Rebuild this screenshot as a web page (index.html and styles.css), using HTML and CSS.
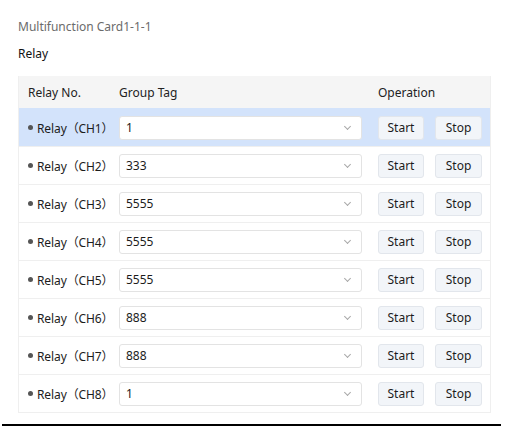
FILE: index.html
```html
<!DOCTYPE html>
<html lang="en">
  <head>
    <title>Relay</title>
    <meta charset="utf-8">
    <link rel="stylesheet" href="styles.css">
  </head>
  <body>
    <div class="card">
      <div class="card-title">Multifunction Card1-1-1</div>
      <div class="section-title">Relay</div>

      <div class="relay-table">
        <div class="row head">
          <div class="cell">Relay No.</div>
          <div class="cell">Group Tag</div>
          <div class="cell">Operation</div>
        </div>

        <div class="row active">
          <div class="cell name"><span class="dot"></span>Relay（CH1）</div>
          <div class="cell"><div class="select"><span>1</span><i class="arrow"></i></div></div>
          <div class="cell ops"><button>Start</button><button>Stop</button></div>
        </div>
        <div class="row">
          <div class="cell name"><span class="dot"></span>Relay（CH2）</div>
          <div class="cell"><div class="select"><span>333</span><i class="arrow"></i></div></div>
          <div class="cell ops"><button>Start</button><button>Stop</button></div>
        </div>
        <div class="row">
          <div class="cell name"><span class="dot"></span>Relay（CH3）</div>
          <div class="cell"><div class="select"><span>5555</span><i class="arrow"></i></div></div>
          <div class="cell ops"><button>Start</button><button>Stop</button></div>
        </div>
        <div class="row">
          <div class="cell name"><span class="dot"></span>Relay（CH4）</div>
          <div class="cell"><div class="select"><span>5555</span><i class="arrow"></i></div></div>
          <div class="cell ops"><button>Start</button><button>Stop</button></div>
        </div>
        <div class="row">
          <div class="cell name"><span class="dot"></span>Relay（CH5）</div>
          <div class="cell"><div class="select"><span>5555</span><i class="arrow"></i></div></div>
          <div class="cell ops"><button>Start</button><button>Stop</button></div>
        </div>
        <div class="row">
          <div class="cell name"><span class="dot"></span>Relay（CH6）</div>
          <div class="cell"><div class="select"><span>888</span><i class="arrow"></i></div></div>
          <div class="cell ops"><button>Start</button><button>Stop</button></div>
        </div>
        <div class="row">
          <div class="cell name"><span class="dot"></span>Relay（CH7）</div>
          <div class="cell"><div class="select"><span>888</span><i class="arrow"></i></div></div>
          <div class="cell ops"><button>Start</button><button>Stop</button></div>
        </div>
        <div class="row">
          <div class="cell name"><span class="dot"></span>Relay（CH8）</div>
          <div class="cell"><div class="select"><span>1</span><i class="arrow"></i></div></div>
          <div class="cell ops"><button>Start</button><button>Stop</button></div>
        </div>
      </div>
    </div>
    <div class="rule"></div>
  </body>
</html>
```

FILE: styles.css
```css
body {
  margin: 0;
  background: #fff;
  font-family: "Noto Sans", "Noto Sans CJK SC", sans-serif;
  font-size: 12px;
  color: #1c1c1c;
}

.card {
  padding: 18px 17px 0 18px;
}

.card-title {
  line-height: 18px;
  font-size: 12px;
  color: #6b6b6b;
}

.section-title {
  margin-top: 9px;
  line-height: 18px;
  font-size: 12px;
  color: #111;
}

.relay-table {
  margin-top: 13px;
  width: 473px;
  border: 1px solid #efefef;
  border-top: none;
  box-sizing: border-box;
}

.row {
  display: grid;
  grid-template-columns: 91px 259px 1fr;
  align-items: center;
  height: 38px;
  padding-left: 9px;
  border-top: 1px solid #efefef;
  box-sizing: border-box;
}

.row.head {
  height: 32px;
  border-top: none;
  background: #f5f5f5;
  color: #222;
}

.row.active {
  background: #d3e3fb;
  border-top-color: #d3e3fb;
}

.cell.name {
  display: flex;
  align-items: center;
  white-space: nowrap;
  letter-spacing: -0.1px;
}

.dot {
  width: 5px;
  height: 5px;
  border-radius: 50%;
  background: #555;
  margin-right: 4px;
}

.select {
  display: flex;
  align-items: center;
  justify-content: space-between;
  width: 243px;
  height: 24px;
  padding: 0 11px 0 6px;
  box-sizing: border-box;
  background: #fff;
  border: 1px solid #e3e3e3;
  border-radius: 3px;
}

.arrow {
  width: 4px;
  height: 4px;
  border-right: 1px solid #a8a8a8;
  border-bottom: 1px solid #a8a8a8;
  transform: rotate(45deg);
  margin-top: -3px;
}

.ops {
  display: flex;
  gap: 11px;
}

.ops button {
  height: 24px;
  width: 46px;
  padding: 0;
  font-family: inherit;
  font-size: 12px;
  color: #1c1c1c;
  background: #f2f5f9;
  border: 1px solid #e2e6ec;
  border-radius: 3px;
}

.ops button + button {
  width: 47px;
}

.rule {
  margin: 11px 7px 0 2px;
  height: 2px;
  background: #000;
}
```
